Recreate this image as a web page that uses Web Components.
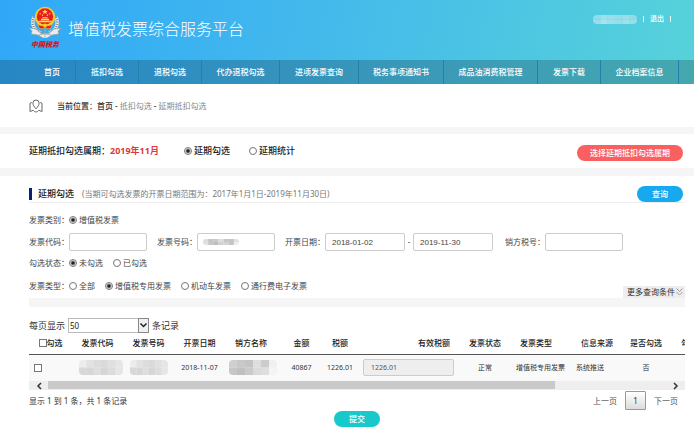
<!DOCTYPE html>
<html lang="zh-CN">
<head>
<meta charset="utf-8">
<title>增值税发票综合服务平台</title>
<style>
  body { margin: 0; background: #fff; color: #333; font: 8px/12px "Noto Sans", "Noto Sans CJK SC", sans-serif; }
</style>
</head>
<body>
<tax-app></tax-app>
<script>
const BASE = `<style>
  *, *::before, *::after { box-sizing: border-box; }
  :host { display: block; }
  input, select, button { font: inherit; color: inherit; margin: 0; }
  button { border: 0; padding: 0; background: none; cursor: pointer; }
  a { color: inherit; text-decoration: none; }
</style>`;
function define(name, html) {
  customElements.define(name, class extends HTMLElement {
    constructor() {
      super();
      this.attachShadow({ mode: 'open' }).innerHTML = BASE + (typeof html === 'function' ? html(this) : html);
    }
  });
}

define('tax-emblem', `<style>
  :host { width: 34px; text-align: center; }
  svg { display: block; margin: 0 auto; width: 32px; height: 32px; }
  span { display: block; color: #d9131c; font: italic 900 7px/12px "Noto Sans CJK SC", sans-serif; white-space: nowrap; }
</style>
<svg viewBox="0 0 32 32" aria-hidden="true">
  <path d="M5 11c-3 7 0 14 7 16M27 11c3 7 0 14-7 16" fill="none" stroke="#eef0f0" stroke-width="3.4"/>
  <path d="M5 11c-3 7 0 14 7 16M27 11c3 7 0 14-7 16" fill="none" stroke="#777d80" stroke-width="2.6" stroke-dasharray="1 1.3"/>
  <path d="M0 22l7 1 5 4h8l5-4 7-1-3 3 1 3-7 1-5 3h-4l-5-3-7-1 1-3z" fill="#e9eceb" stroke="#8d979b" stroke-width=".6"/>
  <path d="M7 23l6 5h6l6-5M10 29l6-2 6 2" fill="none" stroke="#8d979b" stroke-width=".7"/>
  <circle cx="16" cy="11" r="10.2" fill="#f6cf2c"/>
  <circle cx="16" cy="10.5" r="8.2" fill="#e8201d"/>
  <path d="M16 3.2l.8 1.9h2l-1.6 1.2.6 2-1.8-1.2-1.8 1.2.6-2-1.6-1.2h2z" fill="#ffe04a"/>
  <g fill="#ffe04a"><circle cx="11.2" cy="7.7" r=".7"/><circle cx="13.5" cy="9.3" r=".7"/><circle cx="18.5" cy="9.3" r=".7"/><circle cx="20.8" cy="7.7" r=".7"/>
  <path d="M9.5 14.8h13v1.5h-13zM12 12.8h8v1.4h-8zM13.5 11.2h5v1h-5z"/></g>
  <path d="M9 18c2 2 4 2.300 7 .7 3 1.600 5 1.300 7-.7l-1 4c-2 1-4 1-6-.5-2 1.500-4 1.500-6 .5z" fill="#e8201d" stroke="#f6cf2c" stroke-width=".5"/>
  <circle cx="16" cy="19.500" r="2" fill="#f6cf2c"/>
  <path d="M16 22v9" stroke="#a7aeb0" stroke-width=".8"/>
</svg><span>中国税务</span>`);

define('pixel-mask', el => {
  const cols = (el.getAttribute('shades') || '').split(' ');
  const n = cols.length / 2;
  return `<style>
    :host { width: ${el.getAttribute('w')}px; height: ${el.getAttribute('h')}px; border-radius: 4px; overflow: hidden; }
    svg { display: block; width: 100%; height: 100%; }
  </style><svg viewBox="0 0 ${n} 2" preserveAspectRatio="none" aria-hidden="true">${
    cols.map((c, i) => `<rect x="${i % n}" y="${Math.floor(i / n)}" width="1.02" height="1.02" fill="${c}"/>`).join('')}</svg>`;
});

define('app-header', `<style>
  :host { background: linear-gradient(100deg, #30a8f8 0%, #45bbea 50%, #56d2da 100%); color: #fff; }
  .top { display: flex; align-items: flex-start; height: 60px; padding: 6px 23px 0 28px; }
  h1 { margin: 10px 0 0 6px; font-weight: 300; font-size: 16px; line-height: 26px; }
  .user { margin-left: auto; display: flex; gap: 6px; align-items: center; padding-top: 7px; font-size: 7px; font-weight: 500; }
  .user i { width: 1px; height: 6px; background: #e8fafd; }
  nav { background: rgba(0,0,0,.2); padding-left: 29px; height: 24px;
    display: grid; grid-template-columns: 47fr 63fr 63fr 78fr 79fr 85fr 94fr 63fr 78fr 15fr; }
  nav a { display: flex; align-items: center; justify-content: center; border-right: 1px solid #2281ab; white-space: nowrap; font-weight: 500; }
</style>
<div class="top">
  <tax-emblem></tax-emblem>
  <h1>增值税发票综合服务平台</h1>
  <div class="user">
    <pixel-mask w="44" h="9" shades="#8fdcec #9ce1ee #98dfe9 #94dde9 #98dfe9 #8fdde7 #98dcec #a9e3f0 #9be0ea #96deea #9fe2eb #94dfe8"></pixel-mask>
    <i></i><a href="#logout">退出</a><i></i>
  </div>
</div>
<nav><a href="#">首页</a><a href="#">抵扣勾选</a><a href="#">退税勾选</a><a href="#">代办退税勾选</a><a href="#">进项发票查询</a><a href="#">税务事项通知书</a><a href="#">成品油消费税管理</a><a href="#">发票下载</a><a href="#">企业档案信息</a></nav>`);

define('crumb-bar', `<style>
  :host { display: flex; align-items: center; height: 43px; padding-left: 29px; color: #888; }
  svg { width: 14px; height: 14px; margin-right: 14px; }
  b { color: #333; font-weight: 500; }
</style>
<svg viewBox="0 0 14 14" fill="none" stroke="#666" stroke-width="1" stroke-linejoin="round" aria-hidden="true">
  <path d="M2.800 3.500L1 4.200v8.300l3.200-1.200c1.800 2.200 4 2.200 5.600 0L13 12.500V4.200l-1.800-.7"/>
  <path d="M7 9.800C5 7.600 3.900 6 3.900 4.100a3.100 3.100 0 0 1 6.200 0C10.100 6 9 7.600 7 9.800z"/>
</svg>
<div><b>当前位置：<a href="#">首页</a> - </b><a href="#">抵扣勾选</a><b> - </b><a href="#">延期抵扣勾选</a></div>`);

define('radio-group', el => {
  const name = el.getAttribute('name'), on = el.getAttribute('checked');
  return `<style>
    :host { display: flex; gap: var(--radio-gap, 10px); }
    label { display: flex; align-items: center; gap: 2px; white-space: nowrap; }
    input { appearance: none; width: 8px; height: 8px; border: 1px solid #777; border-radius: 50%; background: #fff; }
    input:checked { background: radial-gradient(circle, #222 0 1px, #fff 3px); }
  </style>` + el.getAttribute('options').split(',').map(o =>
    `<label><input type="radio" name="${name}"${o === on ? ' checked' : ''}>${o}</label>`).join('');
});

define('pill-button', `<style>
  button { display: block; height: 16px; padding: 0 var(--pill-pad, 15px); border-radius: 8px; background: var(--pill); color: #fff; font-weight: 500; white-space: nowrap; }
</style><button type="button"><slot></slot></button>`);

define('period-bar', `<style>
  :host { display: flex; align-items: center; height: 34px; padding: 0 11px 0 29px; font-size: 9px; font-weight: 500; color: #222; --radio-gap: 19px; }
  strong { color: #dd3a3a; font-weight: 700; margin-right: 25px; }
  pill-button { margin-left: auto; --pill: #fa6060; --pill-pad: 13px; font-size: 8px; padding-top: 4px; }
</style>
<span>延期抵扣勾选属期：</span><strong>2019年11月</strong>
<radio-group name="mode" options="延期勾选,延期统计" checked="延期勾选"></radio-group>
<pill-button>选择延期抵扣勾选属期</pill-button>`);

define('text-field', el => `<style>
  :host { display: flex; align-items: center; }
  label { white-space: nowrap; }
  .box { display: grid; align-items: center; }
  .box > *, ::slotted(*) { grid-area: 1 / 1; }
  slot { display: contents; }
  input { width: var(--field, 78px); height: 18px; border: 1px solid #ccc; border-radius: 2px; padding: 0 6px; background: #fff; font-family: "Liberation Sans", sans-serif; }
  ::slotted(*) { margin-left: 6px; }
</style><label for="f">${el.getAttribute('label')}</label><div class="box"><input id="f" value="${el.getAttribute('value') || ''}"${el.hasAttribute('hint') ? ` aria-label="${el.getAttribute('hint')}"` : ''}><slot></slot></div>`);

define('search-panel', `<style>
  :host { padding: 9px 9px 0 29px; color: #444; }
  header { display: flex; align-items: center; height: 18px; padding-right: 2px; border-bottom: 1px solid #eee; }
  h2 { margin: 0 8px 0 0; padding-left: 6px; border-left: 3px solid #0b2273; font-size: 9px; line-height: 12px; font-weight: 500; color: #222; }
  header span { color: #777; }
  header pill-button { margin-left: auto; --pill: #17a9ee; }
  .row { display: flex; align-items: center; height: 20px; }
  .kinds { padding-top: 6px; height: 28px; }
  .fields { gap: 10px; height: 22px; }
  .dates { display: flex; align-items: center; --field: 80px; padding-right: 2px; }
  .dates span { width: 8px; text-align: center; }
  .types { justify-content: space-between; align-items: stretch; height: 25px; }
  .types > div { display: flex; align-items: center; }
  .more { align-self: flex-end; display: flex; align-items: center; gap: 1px; height: 12px; padding: 0 2px 0 4px; background: #eee; color: #333; white-space: nowrap; }
  .more svg { width: 7px; height: 8px; }
  .strip { height: 9px; background: #f5f5f5; }
</style>
<header><h2>延期勾选</h2><span>(当期可勾选发票的开票日期范围为：2017年1月1日-2019年11月30日)</span><pill-button>查询</pill-button></header>
<div class="row kinds"><span>发票类别：</span><radio-group name="kind" options="增值税发票" checked="增值税发票"></radio-group></div>
<div class="row fields">
  <text-field label="发票代码："></text-field>
  <text-field label="发票号码："><pixel-mask w="36" h="6" shades="#ddd #c4c4c4 #c9c9c9 #ddd #c6c6c6 #c4c4c4 #e2e2e2 #e2e2e2 #c8c8c8 #bdbdbd #d2d2d2 #d4d4d4 #c4c4c4 #eee"></pixel-mask></text-field>
  <div class="dates"><text-field label="开票日期：" value="2018-01-02"></text-field><span>-</span><text-field label="" hint="结束日期" value="2019-11-30"></text-field></div>
  <text-field label="销方税号："></text-field>
</div>
<div class="row"><span>勾选状态：</span><radio-group name="state" options="未勾选,已勾选" checked="未勾选"></radio-group></div>
<div class="row types"><div><span>发票类型：</span><radio-group name="type" options="全部,增值税专用发票,机动车发票,通行费电子发票" checked="增值税专用发票"></radio-group></div>
  <button class="more" type="button">更多查询条件<svg viewBox="0 0 7 8" fill="none" stroke="#999" aria-hidden="true"><path d="M.5.5l3 3 3-3M.5 4l3 3 3-3"/></svg></button></div>
<div class="strip"></div>`);

define('page-size', `<style>
  :host { display: flex; align-items: center; gap: 3px; font-size: 9px; color: #333; }
  .pick { display: grid; width: 81px; height: 15px; }
  .pick > * { grid-area: 1 / 1; }
  select { appearance: none; border: 1px solid #bbb; border-radius: 0; background: #fff; padding: 0 12px 0 1px; font-size: 8px; height: 15px; color: #222; }
  svg { justify-self: end; width: 11px; height: 15px; pointer-events: none; }
</style>
<label for="n">每页显示</label>
<div class="pick"><select id="n"><option>50</option><option>100</option></select>
<svg viewBox="0 0 11 15" aria-hidden="true"><rect x=".5" y=".5" width="10" height="14" fill="#f0f0f0" stroke="#888"/><path d="M2.500 5.500l3 3 3-3" fill="none" stroke="#222" stroke-width="1.500"/></svg></div>
<span>条记录</span>`);

const soft = "#ececec #e2e2e2 #dcdcdc #dadada #e0e0e0 #e6e6e6 #d8d8d8 #d6d6d6 #dedede #d6d6d6 #dcdcdc #e6e6e6";
const hard = "#cfcfcf #c8c8c8 #c4c4c4 #dedede #cccccc #f0f0f0 #c6c6c6 #c0c0c0 #cacaca #dadada #dedede #f4f4f4";
define('invoice-table', `<style>
  .view { overflow: hidden; }
  table { table-layout: fixed; width: 694px; border-collapse: collapse; }
  th, td { padding: 0; text-align: center; white-space: nowrap; }
  th { height: 21px; font-weight: 500; color: #222; border-bottom: 1px solid #555; }
  td { height: 27px; background: #f9f9f9; font-size: 7px; color: #333; }
  th label { display: inline-flex; align-items: center; }
  .tick { appearance: none; display: inline-block; width: 8px; height: 8px; border: 1px solid #777; background: #fff; vertical-align: middle; }
  td:first-child { text-align: left; padding-left: 5px; }
  th.tax { text-align: right; padding-right: 13px; }
  td input.val { width: 91px; height: 17px; border: 1px solid #ccc; border-radius: 2px; background: #eee; padding: 0 7px; font-size: 7px; color: #555; vertical-align: middle; }
  th.t { text-align: left; padding-left: 13px; } td.t { text-align: left; padding-left: 9px; }
  th.s { text-align: left; padding-left: 10px; } td.s { text-align: left; padding-left: 5px; }
  pixel-mask { margin: 0 auto; }
  td:nth-child(2) pixel-mask, td:nth-child(5) pixel-mask { margin-right: 0; }
  .bar { display: flex; align-items: center; background: #eee; height: 9px; }
  .bar button { width: 19px; height: 9px; display: grid; place-items: center; }
  .bar svg { width: 6px; height: 8px; }
  .track { flex: 1; height: 9px; }
  .thumb { width: 82%; height: 8px; background: #c9c9c9; }
</style>
<div class="view"><table>
<colgroup>${[43,51,51,51,52,49,28,109,44,64,50,50,52].map(w => `<col style="width:${w}px">`).join('')}</colgroup>
<thead><tr><th><label><input class="tick" type="checkbox">勾选</label></th><th>发票代码</th><th>发票号码</th><th>开票日期</th><th>销方名称</th><th>金额</th><th>税额</th><th class="tax">有效税额</th><th>发票状态</th><th class="t">发票类型</th><th class="s">信息来源</th><th>是否勾选</th><th>勾选时间</th></tr></thead>
<tbody><tr><td><input class="tick" type="checkbox" aria-label="勾选发票"></td>
<td><pixel-mask w="44" h="15" shades="${soft}"></pixel-mask></td><td><pixel-mask w="38" h="15" shades="${soft}"></pixel-mask></td>
<td>2018-11-07</td><td><pixel-mask w="48" h="15" shades="${hard}"></pixel-mask></td><td>40867</td><td>1226.01</td>
<td><input class="val" value="1226.01" readonly aria-label="有效税额"></td><td>正常</td><td class="t">增值税专用发票</td><td class="s">系统推送</td><td>否</td><td></td></tr></tbody>
</table></div>
<div class="bar"><button type="button" aria-label="向左"><svg viewBox="0 0 6 8" fill="none" stroke="#333" stroke-width="1.500"><path d="M5 1L2 4l3 3"/></svg></button>
<div class="track"><div class="thumb"></div></div>
<button type="button" aria-label="向右"><svg viewBox="0 0 6 8" fill="none" stroke="#333" stroke-width="1.500"><path d="M1 1l3 3-3 3"/></svg></button></div>`);

define('table-pager', `<style>
  :host { display: flex; justify-content: space-between; align-items: center; height: 21px; padding-right: 7px; color: #333; }
  nav { display: flex; align-items: center; gap: 8px; color: #555; }
  .now { width: 21px; height: 19px; border: 1px solid #999; border-radius: 1px; background: linear-gradient(#fff, #dcdcdc); color: #333; }
</style>
<span>显示 1 到 1 条，共 1 条记录</span>
<nav><button type="button">上一页</button><button type="button" class="now">1</button><button type="button">下一页</button></nav>`);

define('tax-app', `<style>
  .gap { background: #f5f5f5; }
  .a { height: 7px; } .b { height: 8px; }
  .list { padding: 11px 9px 0 29px; }
  .submit { display: flex; justify-content: center; --pill: #18c9cb; }
</style>
<app-header></app-header>
<crumb-bar></crumb-bar>
<div class="gap a"></div>
<period-bar></period-bar>
<div class="gap b"></div>
<search-panel></search-panel>
<div class="list">
  <page-size></page-size>
  <invoice-table></invoice-table>
  <table-pager></table-pager>
  <div class="submit"><pill-button>提交</pill-button></div>
</div>`);
</script>
</body>
</html>
